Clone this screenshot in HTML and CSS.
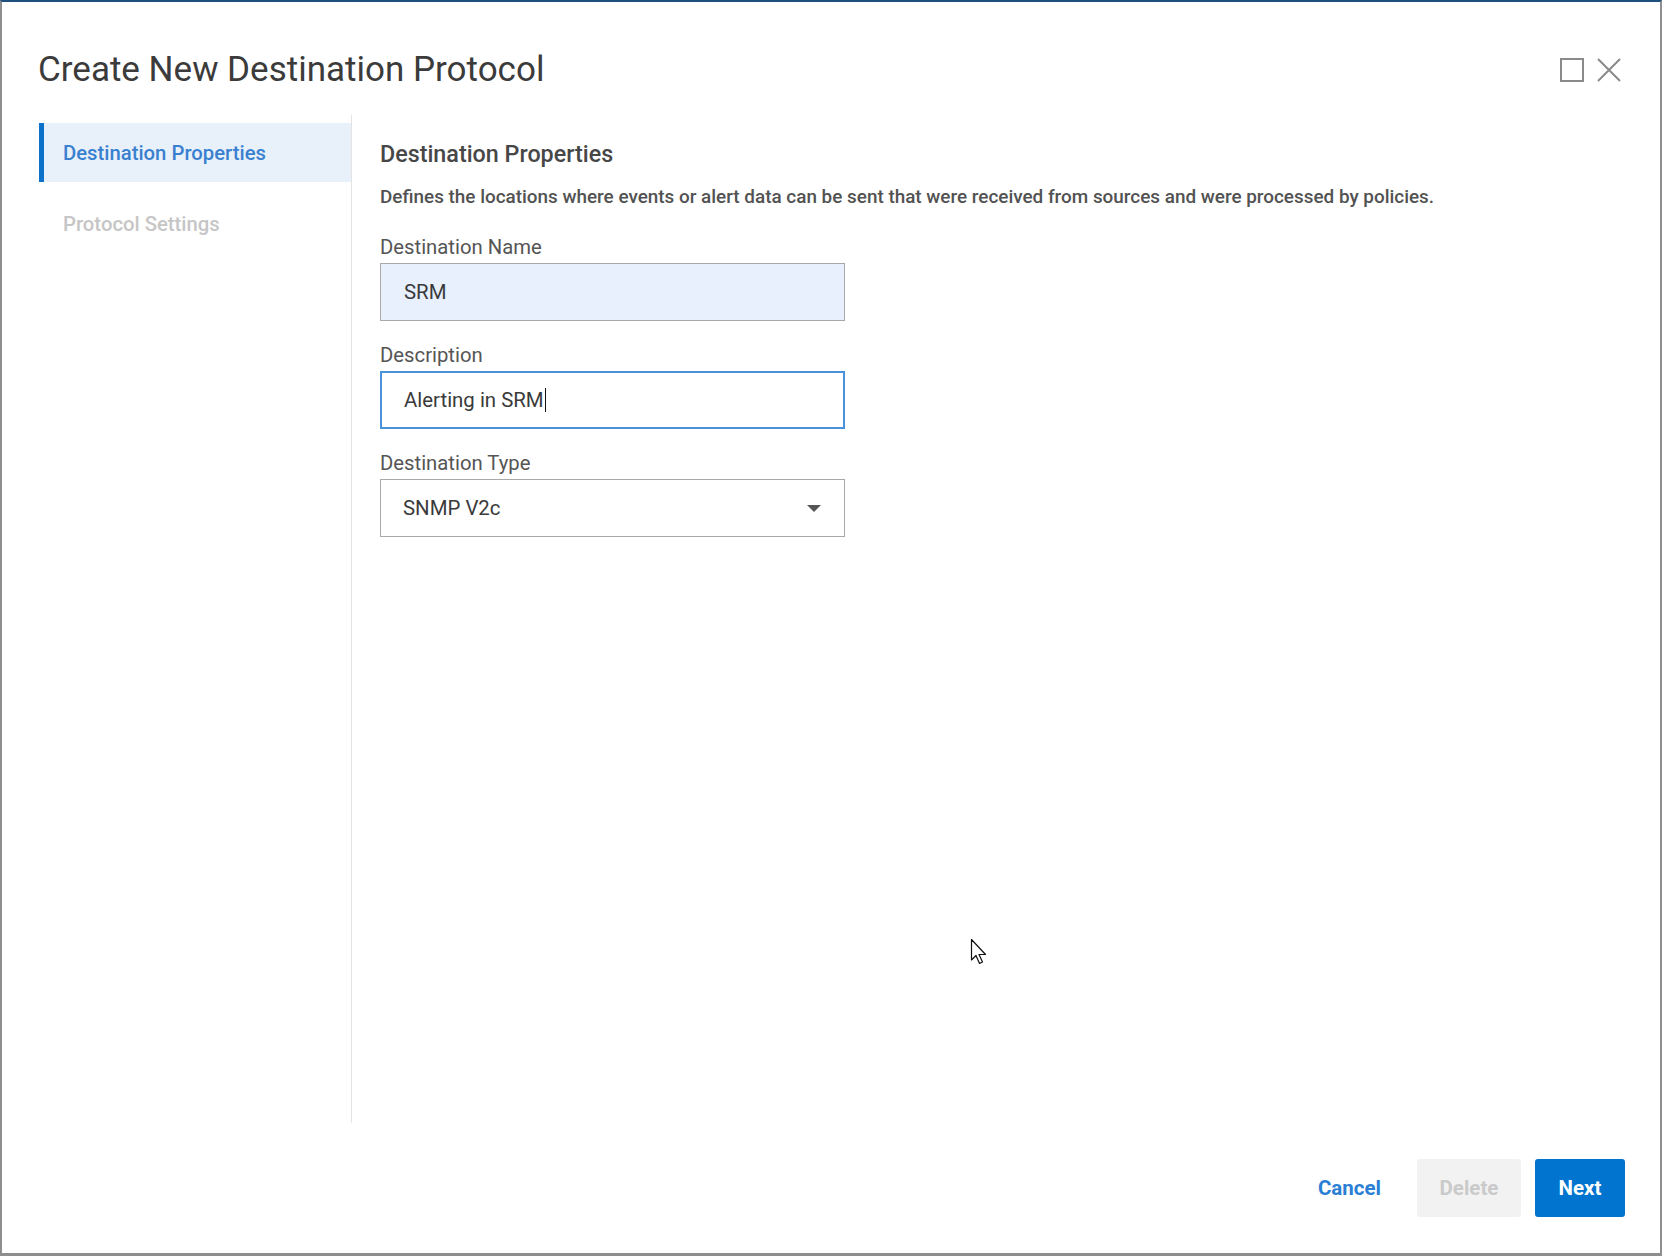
FILE: index.html
```html
<!DOCTYPE html>
<html lang="en">
<head>
<meta charset="utf-8">
<title>Create New Destination Protocol</title>
<link rel="stylesheet" href="styles.css">
</head>
<body>
<div class="dialog">
  <header class="dialog-header">
    <h1 class="dialog-title">Create New Destination Protocol</h1>
    <div class="window-controls">
      <svg class="ctl" width="26" height="26" viewBox="0 0 26 26" aria-label="Maximize">
        <rect x="2" y="2" width="22" height="22" fill="none" stroke="#8a8a8a" stroke-width="2"/>
      </svg>
      <svg class="ctl" width="26" height="26" viewBox="0 0 26 26" aria-label="Close">
        <path d="M2 2 L24 24 M24 2 L2 24" stroke="#8a8a8a" stroke-width="2" fill="none"/>
      </svg>
    </div>
  </header>
  <div class="dialog-body">
    <nav class="steps">
      <div class="step active">Destination Properties</div>
      <div class="step">Protocol Settings</div>
    </nav>
    <main class="content">
      <h2 class="section-title">Destination Properties</h2>
      <p class="section-desc">Defines the locations where events or alert data can be sent that were received from sources and were processed by policies.</p>
      <div class="field">
        <label class="field-label">Destination Name</label>
        <div class="input autofill">SRM</div>
      </div>
      <div class="field">
        <label class="field-label">Description</label>
        <div class="input focused">Alerting in SRM<span class="caret-line"></span></div>
      </div>
      <div class="field">
        <label class="field-label">Destination Type</label>
        <div class="input select">
          <span>SNMP V2c</span>
          <svg width="14" height="8" viewBox="0 0 14 8"><path d="M0 0 L14 0 L7 7 Z" fill="#555"/></svg>
        </div>
      </div>
    </main>
  </div>
  <footer class="dialog-footer">
    <button class="btn btn-link">Cancel</button>
    <button class="btn btn-disabled">Delete</button>
    <button class="btn btn-primary">Next</button>
  </footer>
  <svg class="pointer" width="20" height="30" viewBox="0 0 20 30">
    <path d="M1.5 1.5 L1.5 22 L6 17.5 L9.5 25.5 L12.5 24 L9 16.5 L15.5 16.5 Z" fill="#fff" stroke="#111" stroke-width="1.2" stroke-linejoin="round"/>
  </svg>
</div>
</body>
</html>
```
FILE: styles.css
```css
* { box-sizing: border-box; }
html, body { margin: 0; padding: 0; background: #fff; }
body { font-family: Roboto, "Noto Sans", "Liberation Sans", sans-serif; color: #333; }

.dialog {
  position: relative;
  width: 1662px;
  height: 1256px;
  display: flex;
  flex-direction: column;
  border: 2px solid #8e8e8e;
  border-top: 2px solid #1f4f7c;
  border-bottom: 3px solid #8e8e8e;
  background: #fff;
}

.dialog-header {
  height: 113px;
  flex: none;
  display: flex;
  align-items: flex-start;
  justify-content: space-between;
  padding: 48px 38px 0 36px;
}
.dialog-title {
  margin: 0;
  font-size: 35px;
  line-height: 40px;
  font-weight: 400;
  color: #3b3b3b;
}
.window-controls {
  display: flex;
  gap: 11px;
  padding-top: 7px;
}
.ctl { display: block; }

.dialog-body {
  flex: 1;
  display: flex;
  padding-left: 37px;
  min-height: 0;
}
.steps {
  width: 313px;
  flex: none;
  padding-top: 8px;
  border-right: 1px solid #e4e4e4;
  display: flex;
  flex-direction: column;
  gap: 12px;
}
.step {
  height: 59px;
  display: flex;
  align-items: center;
  padding-left: 19px;
  font-size: 20.3px;
  font-weight: 500;
  color: #c6c6c6;
  border-left: 5px solid transparent;
}
.step.active {
  background: #e8f1fa;
  border-left-color: #0b72cc;
  color: #3a80d0;
}

.content {
  flex: 1;
  padding: 25px 0 0 28px;
}
.section-title {
  margin: 0 0 18px;
  font-size: 23.3px;
  line-height: 28px;
  font-weight: 500;
  color: #474747;
}
.section-desc {
  margin: 0 0 28px;
  font-size: 18.9px;
  line-height: 22px;
  font-weight: 500;
  color: #525252;
}
.field { margin-bottom: 23px; width: 465px; }
.field-label {
  display: block;
  font-size: 20.3px;
  line-height: 22px;
  color: #555;
  margin-bottom: 5px;
}
.input {
  height: 58px;
  border: 1px solid #a9a9a9;
  display: flex;
  align-items: center;
  padding: 0 23px;
  font-size: 20.4px;
  color: #3a3a3a;
  background: #fff;
}
.input.autofill { background: #e8f0fe; }
.input.focused { border: 2px solid #4a93da; padding-left: 22px; }
.caret-line {
  display: inline-block;
  width: 1.5px;
  height: 24px;
  background: #111;
  margin-left: 1px;
}
.input.select {
  justify-content: space-between;
  padding: 0 23px 0 22px;
}
.input.select svg { display: block; margin-top: 2px; }

.dialog-footer {
  flex: none;
  display: flex;
  justify-content: flex-end;
  align-items: center;
  gap: 14px;
  padding: 36px 35px 36px 0;
}
.btn {
  height: 58px;
  border: none;
  border-radius: 3px;
  font-family: inherit;
  font-size: 20.5px;
  font-weight: 700;
  padding: 0 18px;
  background: transparent;
}
.btn-link { color: #2a7fd4; margin-right: 4px; }
.btn-disabled { background: #f2f2f2; color: #cacaca; width: 104px; }
.btn-primary { background: #0074cf; color: #fff; width: 90px; }

.pointer {
  position: absolute;
  left: 968px;
  top: 936px;
}
```
